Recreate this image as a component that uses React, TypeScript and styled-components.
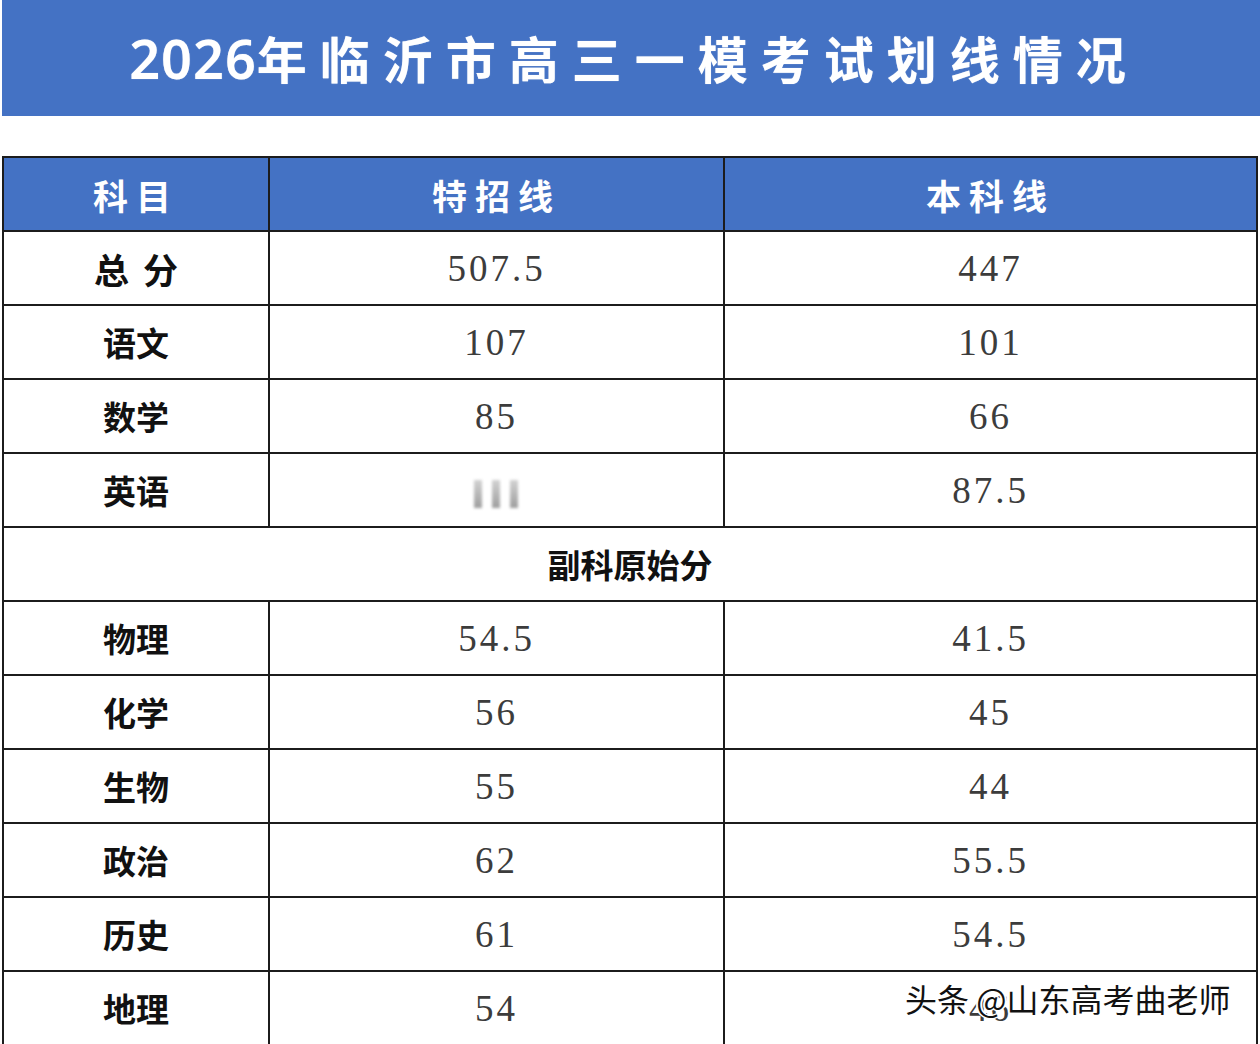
import React from "react";
import styled, { createGlobalStyle } from "styled-components";

const Global = createGlobalStyle`
  html, body { margin: 0; padding: 0; background: #ffffff; }
  body { font-family: "Noto Sans CJK SC", "Noto Sans", sans-serif; }
`;

const Page = styled.div`
  position: relative;
  width: 1260px;
  height: 1044px;
  overflow: hidden;
  background: #ffffff;
`;

const Banner = styled.header`
  margin-left: 2px;
  height: 116px;
  background: #4472c4;
  display: flex;
  align-items: center;
  justify-content: center;
  padding-left: 6px;
`;

const Title = styled.h1`
  margin: 0;
  color: #ffffff;
  font-family: "Noto Sans CJK SC", sans-serif;
  font-weight: 700;
  font-size: 50px;
  letter-spacing: 13px;
  line-height: 1;
  text-shadow: 0 0 1px rgba(255, 255, 255, 0.6);
`;

const Year = styled.span`
  font-family: "Noto Sans", sans-serif;
  font-weight: 600;
  font-size: 54px;
  letter-spacing: 1px;
`;

const Table = styled.table`
  margin-top: 40px;
  margin-left: 2px;
  width: 1256px;
  table-layout: fixed;
  border-collapse: collapse;
  border: 2px solid #1c1c1c;
`;

const HeadCell = styled.th`
  height: 72px;
  padding: 0;
  background: #4472c4;
  border: 2px solid #1c1c1c;
  color: #ffffff;
  font-family: "Noto Sans CJK SC", sans-serif;
  font-weight: 700;
  font-size: 35px;
  letter-spacing: 8px;
  text-align: center;
  vertical-align: middle;
`;

const Cell = styled.td<{ $label?: boolean; $spaced?: boolean }>`
  height: 72px;
  padding: 0;
  border: 2px solid #1c1c1c;
  text-align: center;
  vertical-align: middle;
  color: ${(p) => (p.$label ? "#111111" : "#3c3c3c")};
  font-family: ${(p) =>
    p.$label
      ? `"Noto Sans CJK SC", sans-serif`
      : `"Liberation Serif", "Noto Sans CJK SC", serif`};
  font-weight: ${(p) => (p.$label ? 700 : 400)};
  font-size: ${(p) => (p.$label ? (p.$spaced ? "35px" : "33px") : "37px")};
  letter-spacing: ${(p) => (p.$spaced ? "14px" : p.$label ? "0px" : "3px")};
  text-indent: ${(p) => (p.$spaced ? "14px" : "0")};
  line-height: 1;
`;

const SectionCell = styled.td`
  height: 72px;
  padding: 0;
  border: 2px solid #1c1c1c;
  text-align: center;
  vertical-align: middle;
  color: #111111;
  font-family: "Noto Sans CJK SC", sans-serif;
  font-weight: 700;
  font-size: 33px;
  line-height: 1;
`;

const Blurred = styled.span`
  display: inline-flex;
  gap: 10px;
  align-items: stretch;
  height: 28px;
  filter: blur(1.4px);
  vertical-align: middle;
  margin-left: -2px;
`;

const BlurBar = styled.span`
  width: 8px;
  background: linear-gradient(to bottom, #d2d2d2, #9e9e9e);
`;

const Watermark = styled.div`
  position: absolute;
  left: 905px;
  top: 982px;
  color: #111111;
  font-family: "Noto Sans CJK SC", sans-serif;
  font-size: 32px;
  font-weight: 400;
  letter-spacing: 0px;
  line-height: 1;
  text-shadow: 1px 1px 0 #ffffff, -1px -1px 0 #ffffff, 1px -1px 0 #ffffff,
    -1px 1px 0 #ffffff, 2px 0 0 #ffffff, -2px 0 0 #ffffff;
  white-space: nowrap;
`;

type Row = { name: string; special: string | null; regular: string; spaced?: boolean };

const mainRows: Row[] = [
  { name: "总分", special: "507.5", regular: "447", spaced: true },
  { name: "语文", special: "107", regular: "101" },
  { name: "数学", special: "85", regular: "66" },
  { name: "英语", special: null, regular: "87.5" },
];

const subRows: Row[] = [
  { name: "物理", special: "54.5", regular: "41.5" },
  { name: "化学", special: "56", regular: "45" },
  { name: "生物", special: "55", regular: "44" },
  { name: "政治", special: "62", regular: "55.5" },
  { name: "历史", special: "61", regular: "54.5" },
  { name: "地理", special: "54", regular: "46" },
];

function DataRow({ row }: { row: Row }) {
  return (
    <tr>
      <Cell $label $spaced={row.spaced}>
        {row.name}
      </Cell>
      <Cell>
        {row.special ?? (
          <Blurred aria-label="已遮挡">
            <BlurBar />
            <BlurBar />
            <BlurBar />
          </Blurred>
        )}
      </Cell>
      <Cell>{row.regular}</Cell>
    </tr>
  );
}

export default function App() {
  return (
    <Page>
      <Global />
      <Banner>
        <Title>
          <Year>2026</Year>年临沂市高三一模考试划线情况
        </Title>
      </Banner>
      <Table>
        <colgroup>
          <col style={{ width: "266px" }} />
          <col style={{ width: "455px" }} />
          <col />
        </colgroup>
        <thead>
          <tr>
            <HeadCell>科目</HeadCell>
            <HeadCell>特招线</HeadCell>
            <HeadCell>本科线</HeadCell>
          </tr>
        </thead>
        <tbody>
          {mainRows.map((r) => (
            <DataRow key={r.name} row={r} />
          ))}
          <tr>
            <SectionCell colSpan={3}>副科原始分</SectionCell>
          </tr>
          {subRows.map((r) => (
            <DataRow key={r.name} row={r} />
          ))}
        </tbody>
      </Table>
      <Watermark>头条 @山东高考曲老师</Watermark>
    </Page>
  );
}
